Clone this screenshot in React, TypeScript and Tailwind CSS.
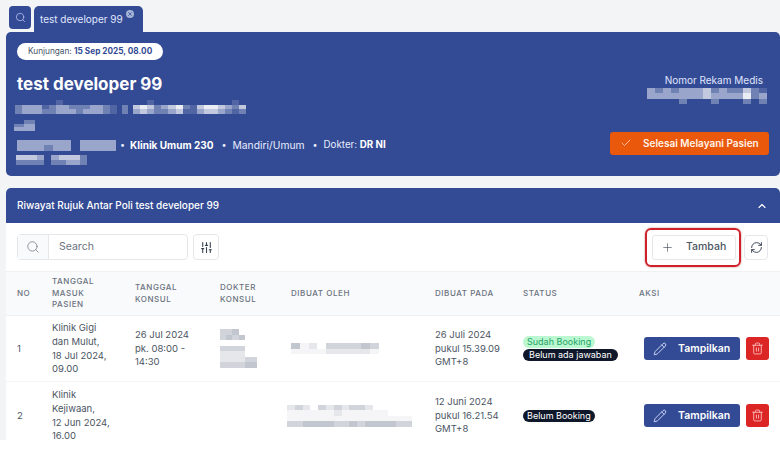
import { Check, ChevronUp, Pencil, Plus, RefreshCw, Search, SlidersVertical, Trash2, X } from "lucide-react";

const BLOCK: Record<string, string> = {
  "0": "bg-transparent",
  "1": "bg-white/15",
  "2": "bg-white/30",
  "3": "bg-white/50",
  "4": "bg-white/70",
  "5": "bg-white/90",
};

const BLOCK_GRAY: Record<string, string> = {
  "0": "bg-transparent",
  "1": "bg-gray-400/10",
  "2": "bg-gray-400/25",
  "3": "bg-gray-400/45",
  "4": "bg-gray-400/60",
  "5": "bg-gray-500/70",
};

// pixelated (censored) text, each digit is one mosaic block
function Mosaic({ rows, size = "w-[5px] h-[5px]", gray }: { rows: string[]; size?: string; gray?: boolean }) {
  const map = gray ? BLOCK_GRAY : BLOCK;
  return (
    <div className="flex flex-col blur-[0.6px]">
      {rows.map((row, i) => (
        <div key={i} className="flex">
          {row.split("").map((c, j) => (
            <span key={j} className={`${size} ${map[c]}`} />
          ))}
        </div>
      ))}
    </div>
  );
}

function Pill({ dark, narrow, children }: { dark?: boolean; narrow?: boolean; children: string }) {
  return (
    <span
      className={`inline-block rounded-full h-[12px] leading-[12px] text-[9px] whitespace-nowrap ${
        narrow ? "px-[4px]" : "px-[6px]"
      } ${dark ? "bg-[#0f172a] text-white" : "bg-[#bbf7d0] text-[#22a565]"}`}
    >
      {children}
    </span>
  );
}

function RowActions() {
  return (
    <div className="flex items-center gap-[6px]">
      <button className="h-[23px] w-[96px] rounded-[3px] bg-[#334b94] text-white flex items-center pl-[9px] text-[10.5px] font-semibold">
        <Pencil size={14} strokeWidth={1.5} className="text-[#dbe4ff]" />
        <span className="ml-[11px]">Tampilkan</span>
      </button>
      <button className="h-[23px] w-[23px] rounded-[3px] bg-[#dc2626] text-[#fecaca] flex items-center justify-center">
        <Trash2 size={13} strokeWidth={1.5} />
      </button>
    </div>
  );
}

const HEAD = "text-[8px] leading-[11.4px] tracking-[0.07em] font-medium text-[#6b7280] uppercase";
const COLS = "grid grid-cols-[35px_83px_85px_71px_144px_88px_116px_1fr] items-center pl-[11px]";
const CELL = "text-[9.5px] leading-[13.6px] text-[#4b5563]";

export default function App() {
  return (
    <div className="h-[440px] overflow-hidden bg-[#f3f4f6] pl-[6px] font-['Inter',sans-serif]">
      {/* tabs */}
      <div className="flex items-start gap-[3px] pl-[3px] pt-[6px] h-[32px]">
        <button className="w-[22px] h-[23px] rounded-[4px] bg-[#334b94] flex items-center justify-center text-[#c7d2fe]">
          <Search size={11} strokeWidth={1.5} />
        </button>
        <div className="w-[109px] h-[26px] rounded-t-[5px] bg-[#334b94] flex items-start pl-[6px] pt-[7px] text-[10px] leading-[13px] text-[#e0e7ff]">
          <span>test developer 99</span>
          <span className="ml-[3px] -mt-[3px] w-[8px] h-[8px] rounded-full bg-[#a5b4d8] flex items-center justify-center text-[#334b94]">
            <X size={6} strokeWidth={3} />
          </span>
        </div>
      </div>

      {/* patient header */}
      <div className="h-[144px] rounded-[5px] bg-[#334b94] pl-[11px] pr-[11px] pt-[11px] flex justify-between text-white">
        <div>
          <div className="flex w-fit items-center h-[17px] rounded-full bg-white px-[11px] text-[8.25px] text-[#475569]">
            Kunjungan:&nbsp;<span className="font-bold text-[#334b94]">15 Sep 2025, 08.00</span>
          </div>
          <div className="mt-[12px] text-[17px] leading-[24px] font-bold">test developer 99</div>
          <div className="mt-[4px] -ml-[2px] flex gap-[5px]">
            <Mosaic
              rows={["000000100000000", "233312332223321", "233322333233321"]}
              size="w-[6.8px] h-[4.7px]"
            />
            <Mosaic rows={["0", "2", "2"]} size="w-[6px] h-[4.7px]" />
            <Mosaic
              rows={["0010000000000010", "4542345214554324", "3432234113443212"]}
              size="w-[7.1px] h-[4.7px]"
            />
          </div>
          <div className="mt-[6px] -ml-[3px]">
            <Mosaic rows={["0022", "2233", "3333"]} size="w-[5.2px] h-[3.7px]" />
          </div>
          <div className="mt-[7px] flex items-center text-[10.3px] leading-[14px] text-[#e8edff]">
            <Mosaic rows={["33333303333", "33323303333"]} size="w-[9px] h-[5.5px]" />
            <span className="ml-[4px] mr-[5px] text-[9px]">•</span>
            <span className="text-[10px] font-bold text-white">Klinik Umum 230</span>
            <span className="ml-[8px] mr-[6px] text-[9px]">•</span>
            <span>Mandiri/Umum</span>
            <span className="ml-[8px] mr-[6px] text-[9px]">•</span>
            <span className="text-[9.75px]">
              Dokter: <span className="font-bold text-white">DR NI</span>
            </span>
          </div>
          <div className="mt-[3px] -ml-[1px]">
            <Mosaic rows={["4443034442", "2222022332"]} size="w-[7.1px] h-[5px]" />
          </div>
        </div>
        <div className="flex flex-col items-end">
          <div className="mt-[30px] mr-[6px] text-[10px] leading-[14px] text-[#e0e7ff]">Nomor Rekam Medis</div>
          <div className="mt-[1px] mr-[2px]">
            <Mosaic rows={["323233342322421", "333333343333523", "000020002000202"]} size="w-[8px] h-[5.3px]" />
          </div>
          <button className="mt-[28px] w-[159px] h-[23px] rounded-[3px] bg-[#ea580c] flex items-center pl-[10px] text-[10px] font-semibold text-[#fff3e8]">
            <Check size={12} strokeWidth={1.25} />
            <span className="ml-[11px]">Selesai Melayani Pasien</span>
          </button>
        </div>
      </div>

      {/* rujuk card */}
      <div className="mt-[12px] rounded-t-[5px] overflow-hidden bg-white">
        <div className="h-[35px] bg-[#334b94] pl-[11px] pr-[12px] flex items-center justify-between text-white">
          <span className="text-[10px] font-medium">Riwayat Rujuk Antar Poli test developer 99</span>
          <ChevronUp size={12} strokeWidth={2.25} />
        </div>

        <div className="h-[48px] pl-[11px] pr-[12px] flex items-center justify-between">
          <div className="flex items-center gap-[5px]">
            <div className="flex h-[26px] w-[171px] rounded-[4px] border border-[#e5e7eb]">
              <div className="w-[31px] flex items-center justify-center border-r border-[#e5e7eb] bg-[#f9fafb] text-[#6b7280]">
                <Search size={14} strokeWidth={1.25} />
              </div>
              <div className="pl-[10px] flex items-center text-[10.5px] text-[#6b7280]">Search</div>
            </div>
            <button className="w-[26px] h-[26px] rounded-[4px] border border-[#e5e7eb] flex items-center justify-center text-[#374151]">
              <SlidersVertical size={13} strokeWidth={2} />
            </button>
          </div>
          <div className="flex items-center gap-[3px]">
            <div className="rounded-[6px] border-2 border-[#d0202a] pl-[5px] pr-[3px] py-[5px] shadow-[0_0_2px_rgba(120,0,0,0.5)]">
              <button className="w-[84px] h-[25px] rounded-[3px] border border-[#e5e7eb] flex items-center pl-[8px] text-[10.5px] font-medium text-[#4b5563] bg-white">
                <Plus size={13} strokeWidth={1.25} />
                <span className="ml-[12px]">Tambah</span>
              </button>
            </div>
            <button className="w-[24px] h-[25px] rounded-[4px] border border-[#e5e7eb] flex items-center justify-center text-[#374151]">
              <RefreshCw size={13} strokeWidth={1.75} />
            </button>
          </div>
        </div>

        {/* table */}
        <div className={`${COLS} ${HEAD} h-[45px] bg-[#f9fafb] border-y border-[#f0f1f3]`}>
          <div>No</div>
          <div>
            Tanggal
            <br />
            Masuk
            <br />
            Pasien
          </div>
          <div>
            Tanggal
            <br />
            Konsul
          </div>
          <div>
            Dokter
            <br />
            Konsul
          </div>
          <div>Dibuat Oleh</div>
          <div>Dibuat Pada</div>
          <div>Status</div>
          <div>Aksi</div>
        </div>

        <div className={`${COLS} ${CELL} h-[66px] border-b border-[#f3f4f6]`}>
          <div>1</div>
          <div>
            Klinik Gigi
            <br />
            dan Mulut,
            <br />
            18 Jul 2024,
            <br />
            09.00
          </div>
          <div>
            26 Jul 2024
            <br />
            pk. 08:00 -
            <br />
            14:30
          </div>
          <div>
            <Mosaic
              gray
              rows={["334000", "343400", "000000", "333300", "222200", "222233", "333344"]}
              size="w-[6.2px] h-[5.5px]"
            />
          </div>
          <div>
            <Mosaic gray rows={["4120333343", "1111222221"]} size="w-[8.8px] h-[5.5px]" />
          </div>
          <div>
            26 Juli 2024
            <br />
            pukul 15.39.09
            <br />
            GMT+8
          </div>
          <div className="flex flex-col items-start gap-[1px]">
            <Pill narrow>Sudah Booking</Pill>
            <Pill dark>Belum ada jawaban</Pill>
          </div>
          <div className="pl-[5px]">
            <RowActions />
          </div>
        </div>

        <div className={`${COLS} ${CELL} h-[67px]`}>
          <div>2</div>
          <div>
            Klinik
            <br />
            Kejiwaan,
            <br />
            12 Jun 2024,
            <br />
            16.00
          </div>
          <div />
          <div />
          <div className="-ml-[4px]">
            <Mosaic
              gray
              rows={["2320323233200000", "1111112111111000", "1111111111111111", "3344443343444433"]}
              size="w-[7.8px] h-[5.5px]"
            />
          </div>
          <div>
            12 Juni 2024
            <br />
            pukul 16.21.54
            <br />
            GMT+8
          </div>
          <div className="flex flex-col items-start">
            <Pill dark narrow>Belum Booking</Pill>
          </div>
          <div className="pl-[5px]">
            <RowActions />
          </div>
        </div>
      </div>
    </div>
  );
}
